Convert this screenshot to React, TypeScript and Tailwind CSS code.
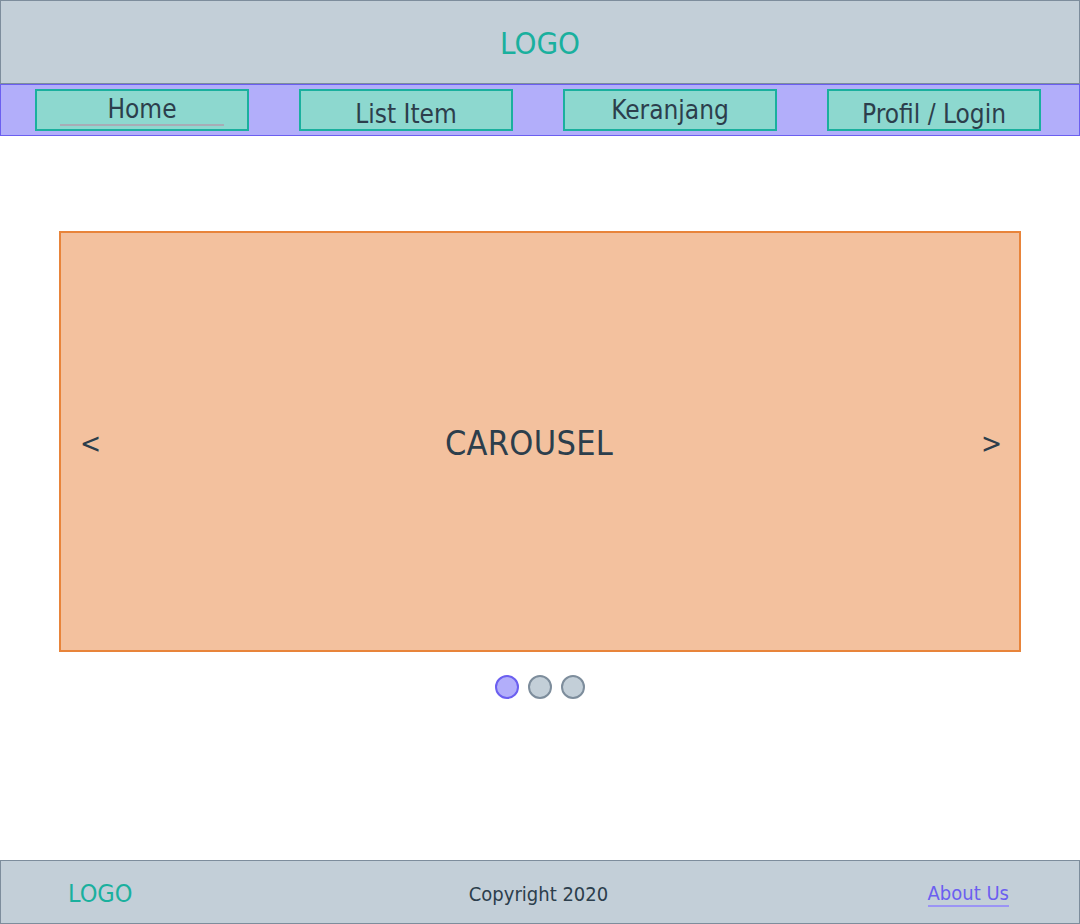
import React, { useState } from 'react';

const navItems = ['Home', 'List Item', 'Keranjang', 'Profil / Login'];

export default function App() {
  const [active, setActive] = useState(0);

  return (
    <div
      className="flex h-[924px] flex-col bg-white text-[#2c3e4c]"
      style={{ fontFamily: '"DejaVu Sans Condensed", "DejaVu Sans", sans-serif' }}
    >
      {/* Header */}
      <header className="flex h-[84px] items-center justify-center border border-[#7d8d9c] bg-[#c3cfd8] pt-[2px]">
        <span className="text-[31px] text-[#1ab09e]">LOGO</span>
      </header>

      {/* Nav */}
      <nav className="flex h-[52px] items-center gap-[50px] border border-[#6b5ff0] bg-[#b2aefa] pl-[34px]">
        {navItems.map((item, i) => (
          <button
            key={item}
            className={`flex h-[42px] w-[214px] items-start justify-center border-2 border-[#1ab09e] bg-[#8dd8cf] text-[26px] ${
              i % 2 === 0 ? 'pt-[4px]' : 'pt-[8px]'
            }`}
          >
            {i === 0 ? (
              <span className="flex w-[164px] justify-center border-b-2 border-[#a7acb6] leading-[29px]">
                {item}
              </span>
            ) : (
              <span className="leading-[30px]">{item}</span>
            )}
          </button>
        ))}
      </nav>

      {/* Carousel */}
      <main className="flex flex-1 flex-col items-center pt-[95px]">
        <div className="flex h-[421px] w-[962px] items-center border-2 border-[#e8843a] bg-[#f3c19e] pl-[19px] pr-[17px]">
          <span className="pt-[4px] text-[28px]">&lt;</span>
          <span className="flex-1 pr-[24px] pt-[3px] text-center text-[34px] tracking-[0.3px]">CAROUSEL</span>
          <span className="pt-[4px] text-[28px]">&gt;</span>
        </div>
        <div className="mt-[23px] flex gap-[9px]">
          {[0, 1, 2].map((d) => (
            <button
              key={d}
              onClick={() => setActive(d)}
              className={`h-[24px] w-[24px] rounded-full border-2 ${
                d === active ? 'border-[#6b5ff0] bg-[#b2aefa]' : 'border-[#7d8d9c] bg-[#c3cfd8]'
              }`}
            />
          ))}
        </div>
      </main>

      {/* Footer */}
      <footer className="grid h-[64px] grid-cols-[1fr_auto_1fr] items-center border border-[#7d8d9c] bg-[#c3cfd8] pl-[67px] pr-[70px] pt-[4px]">
        <span className="justify-self-start text-[25px] text-[#1ab09e]">LOGO</span>
        <span className="text-[20px]">Copyright 2020</span>
        <a className="justify-self-end border-b-2 border-[#9b94f5] text-[20px] leading-[24px] text-[#6b5ff0]">
          About Us
        </a>
      </footer>
    </div>
  );
}
